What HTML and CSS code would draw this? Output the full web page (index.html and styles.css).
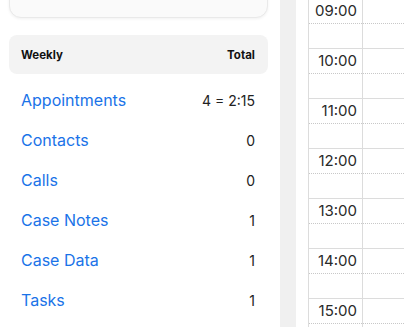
FILE: index.html
```html
<!DOCTYPE html>
<html>
<head>
<meta charset="utf-8">
<link rel="stylesheet" href="styles.css">
</head>
<body>
<div class="sidebar">
  <div class="card"></div>
  <div class="summary-head"><span>Weekly</span><span>Total</span></div>
  <div class="rows">
    <div class="row"><a class="label">Appointments</a><span class="val">4 = 2:15</span></div>
    <div class="row"><a class="label">Contacts</a><span class="val">0</span></div>
    <div class="row"><a class="label">Calls</a><span class="val">0</span></div>
    <div class="row"><a class="label">Case Notes</a><span class="val">1</span></div>
    <div class="row"><a class="label">Case Data</a><span class="val">1</span></div>
    <div class="row"><a class="label">Tasks</a><span class="val">1</span></div>
  </div>
</div>
<div class="gutter"></div>
<div class="main">
  <div class="cal">
    <div class="times">
      <div class="half"><span class="t">09:00</span></div><div class="half full"></div>
      <div class="half"><span class="t">10:00</span></div><div class="half full"></div>
      <div class="half"><span class="t">11:00</span></div><div class="half full"></div>
      <div class="half"><span class="t">12:00</span></div><div class="half full"></div>
      <div class="half"><span class="t">13:00</span></div><div class="half full"></div>
      <div class="half"><span class="t">14:00</span></div><div class="half full"></div>
      <div class="half"><span class="t">15:00</span></div><div class="half full"></div>
    </div>
    <div class="day">
      <div class="half"></div><div class="half full"></div>
      <div class="half"></div><div class="half full"></div>
      <div class="half"></div><div class="half full"></div>
      <div class="half"></div><div class="half full"></div>
      <div class="half"></div><div class="half full"></div>
      <div class="half"></div><div class="half full"></div>
      <div class="half"></div><div class="half full"></div>
    </div>
  </div>
</div>
</body>
</html>
```
FILE: styles.css
```css
html, body {
  margin: 0;
  padding: 0;
  background: #fff;
}
body {
  display: flex;
  height: 327px;
  overflow: hidden;
  font-family: Inter, "Noto Sans", sans-serif;
}
.sidebar {
  width: 280px;
  flex: none;
  box-sizing: border-box;
  padding: 0 12px 0 9px;
  overflow: hidden;
}
.card {
  height: 60px;
  margin-top: -42px;
  background: #fafafa;
  border: 1px solid #e9e9e9;
  border-radius: 12px;
  box-shadow: 0 1px 3px rgba(0,0,0,0.06);
  box-sizing: border-box;
}
.summary-head {
  margin-top: 17px;
  height: 39px;
  background: #f3f3f3;
  border-radius: 8px;
  display: flex;
  align-items: center;
  justify-content: space-between;
  padding: 0 13px 0 12px;
  font-size: 11.5px;
  font-weight: 700;
  color: #111;
}
.rows {
  margin-top: 6px;
}
.row {
  height: 40px;
  display: flex;
  align-items: center;
  justify-content: space-between;
  padding: 0 13px 0 12px;
}
.label {
  color: #1a73e8;
  text-decoration: none;
  font-size: 16px;
}
.val {
  color: #222;
  font-size: 14px;
}
.gutter {
  width: 16px;
  flex: none;
  background: #f0f0f0;
}
.main {
  flex: 1;
  padding-left: 12px;
  overflow: hidden;
}
.cal {
  display: flex;
  margin-top: -1px;
  border-left: 1px solid #dcdcdc;
}
.times {
  width: 53px;
  flex: none;
  border-right: 1px solid #dcdcdc;
}
.day {
  flex: 1;
}
.half {
  height: 24px;
  border-bottom: 1px dotted #c8c8c8;
}
.half.full {
  border-bottom: 1px solid #dcdcdc;
}
.times .half {
  display: flex;
  justify-content: flex-end;
  padding-right: 5px;
}
.t {
  line-height: 20px;
  padding-top: 2px;
  font-size: 15px;
  color: #2a2a2a;
}
```
